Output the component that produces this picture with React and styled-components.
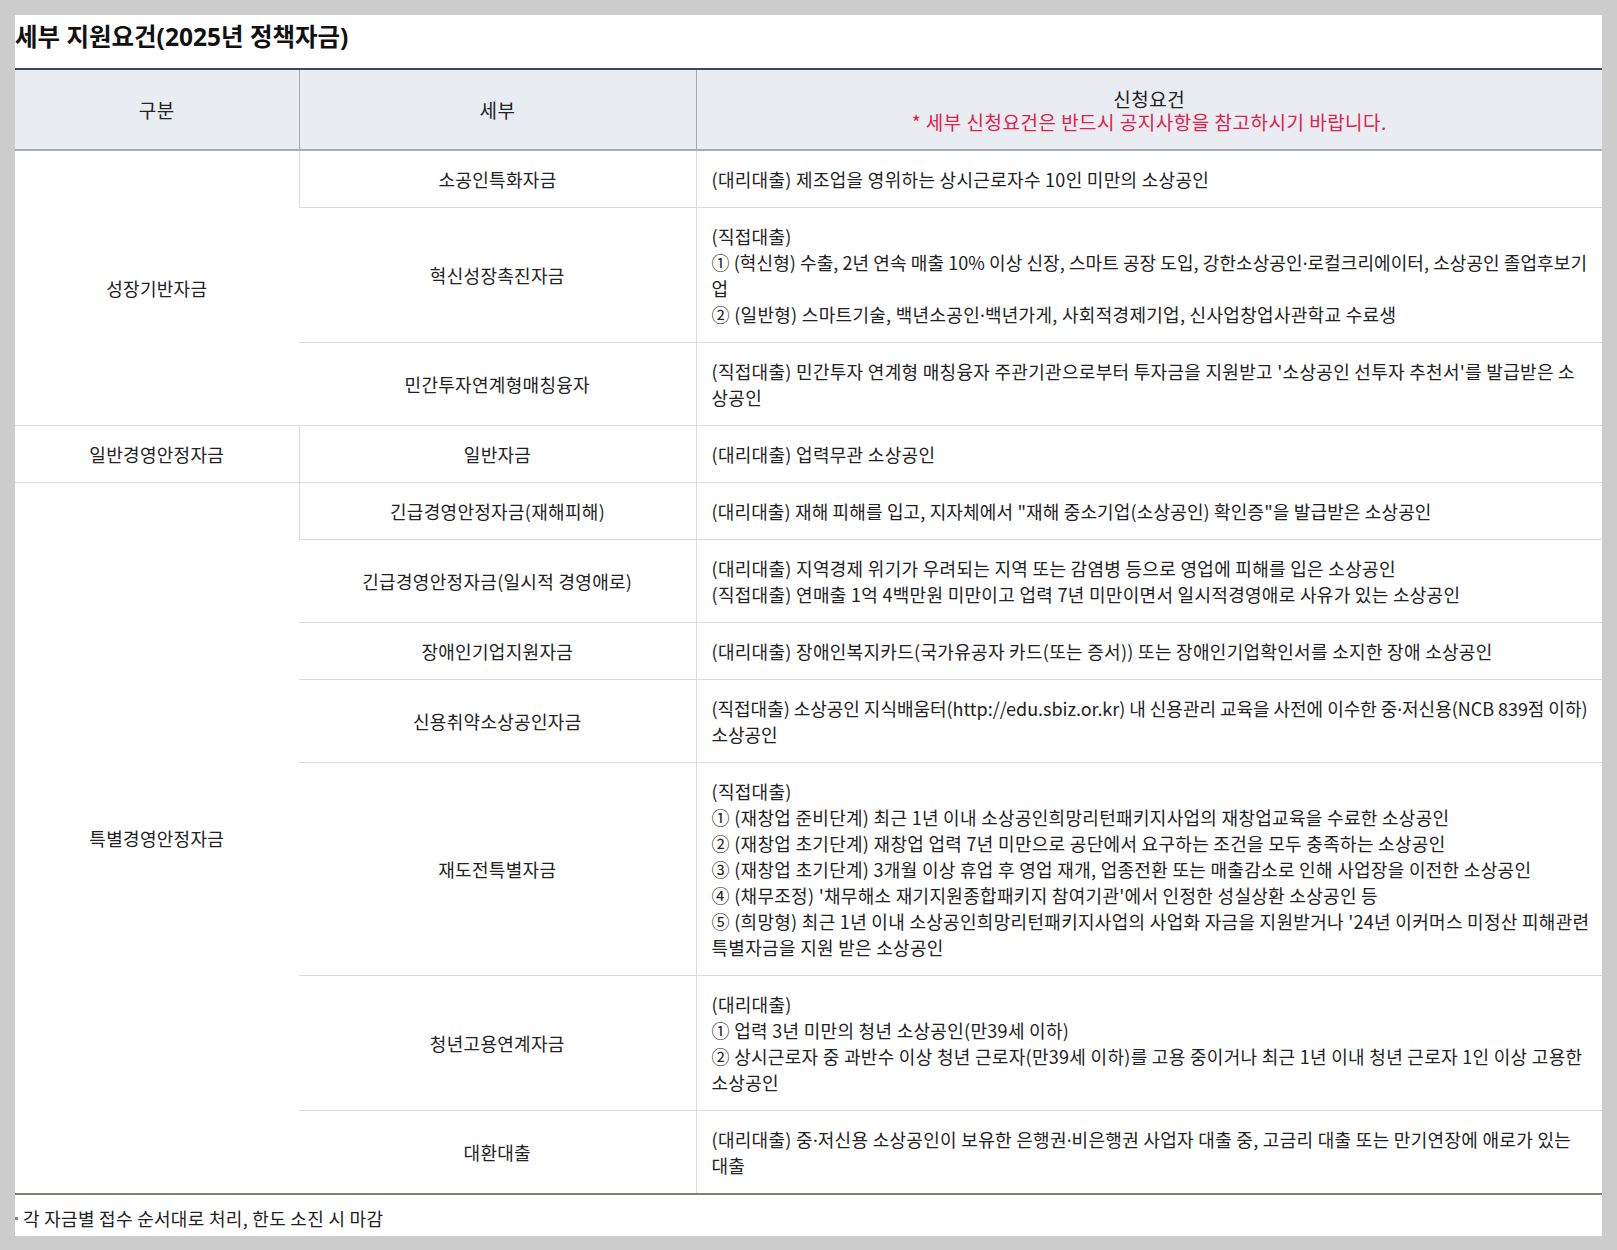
import styled, { createGlobalStyle } from "styled-components";

const GlobalStyle = createGlobalStyle`
  html, body {
    margin: 0;
    padding: 0;
    background: #cccccc;
  }
  body {
    font-family: "Noto Sans CJK KR", "Noto Sans", sans-serif;
    color: #222;
  }
`;

const Panel = styled.div`
  margin: 15px;
  background: #fff;
  padding-bottom: 5px;
`;

const Title = styled.h2`
  margin: 0;
  padding-top: 6px;
  margin-bottom: 15px;
  font-family: "Noto Sans", "Noto Sans CJK KR", sans-serif;
  font-size: 24.5px;
  line-height: 32px;
  font-weight: 700;
  color: #111;
`;

const Table = styled.table`
  width: 100%;
  border-collapse: collapse;
  table-layout: fixed;
  border-top: 2px solid #3d4852;
  border-bottom: 2px solid #808074;
`;

const Th = styled.th`
  height: 79px;
  padding: 0 15px;
  background: #e9ecf1;
  border-left: 1px solid #a9abad;
  border-bottom: 2px solid #a9abad;
  font-size: 19px;
  line-height: 23px;
  letter-spacing: 0.5px;
  font-weight: 400;
  color: #222;
  text-align: center;
  vertical-align: middle;

  &:first-child {
    border-left: none;
  }
`;

const Note = styled.span`
  display: block;
  color: #e0204f;
`;

const Td = styled.td`
  padding: 15px;
  border-left: 1px solid #dcdcdc;
  border-top: 1px solid #dcdcdc;
  font-size: 18px;
  line-height: 26px;
  letter-spacing: 0.3px;
  color: #222;
  vertical-align: middle;
  text-align: ${(p) => (p.$left ? "left" : "center")};

  &:first-child {
    border-left: none;
  }
`;

const Dot = styled.span`
  font-family: "Noto Sans", sans-serif;
  line-height: 1;
  letter-spacing: 0;
`;

const Line = styled.div`
  white-space: pre;
  letter-spacing: ${(p) => (p.$ls != null ? `${p.$ls}px` : "inherit")};
`;

const Footnote = styled.p`
  position: relative;
  margin: 10px 0 0;
  padding-left: 8px;
  font-size: 18px;
  line-height: 26px;
  letter-spacing: 0.3px;
  color: #222;

  &::before {
    content: "";
    position: absolute;
    left: 0;
    top: 12px;
    width: 3px;
    height: 3px;
    background: #8a8a8a;
  }
`;

// narrow middle dot, the CJK one is full width
function withDots(text) {
  const parts = text.split("·");
  return parts.flatMap((p, i) => (i === 0 ? [p] : [<Dot key={i}>·</Dot>, p]));
}

const groups = [
  {
    name: "성장기반자금",
    rows: [
      {
        title: "소공인특화자금",
        lines: ["(대리대출) 제조업을 영위하는 상시근로자수 10인 미만의 소상공인"],
      },
      {
        title: "혁신성장촉진자금",
        lines: [
          "(직접대출)",
          {
            text: "① (혁신형) 수출, 2년 연속 매출 10% 이상 신장, 스마트 공장 도입, 강한소상공인·로컬크리에이터, 소상공인 졸업후보기\n업",
            ls: 0.08,
          },
          "② (일반형) 스마트기술, 백년소공인·백년가게, 사회적경제기업, 신사업창업사관학교 수료생",
        ],
      },
      {
        title: "민간투자연계형매칭융자",
        lines: [
          "(직접대출) 민간투자 연계형 매칭융자 주관기관으로부터 투자금을 지원받고 '소상공인 선투자 추천서'를 발급받은 소\n상공인",
        ],
      },
    ],
  },
  {
    name: "일반경영안정자금",
    rows: [{ title: "일반자금", lines: ["(대리대출) 업력무관 소상공인"] }],
  },
  {
    name: "특별경영안정자금",
    rows: [
      {
        title: "긴급경영안정자금(재해피해)",
        lines: [
          {
            text: '(대리대출) 재해 피해를 입고, 지자체에서 "재해 중소기업(소상공인) 확인증"을 발급받은 소상공인',
            ls: 0.15,
          },
        ],
      },
      {
        title: "긴급경영안정자금(일시적 경영애로)",
        lines: [
          "(대리대출) 지역경제 위기가 우려되는 지역 또는 감염병 등으로 영업에 피해를 입은 소상공인",
          "(직접대출) 연매출 1억 4백만원 미만이고 업력 7년 미만이면서 일시적경영애로 사유가 있는 소상공인",
        ],
      },
      {
        title: "장애인기업지원자금",
        lines: [
          "(대리대출) 장애인복지카드(국가유공자 카드(또는 증서)) 또는 장애인기업확인서를 소지한 장애 소상공인",
        ],
      },
      {
        title: "신용취약소상공인자금",
        lines: [
          {
            text: "(직접대출) 소상공인 지식배움터(http://edu.sbiz.or.kr) 내 신용관리 교육을 사전에 이수한 중·저신용(NCB 839점 이하)\n소상공인",
            ls: -0.03,
          },
        ],
      },
      {
        title: "재도전특별자금",
        lines: [
          "(직접대출)",
          "① (재창업 준비단계) 최근 1년 이내 소상공인희망리턴패키지사업의 재창업교육을 수료한 소상공인",
          "② (재창업 초기단계) 재창업 업력 7년 미만으로 공단에서 요구하는 조건을 모두 충족하는 소상공인",
          "③ (재창업 초기단계) 3개월 이상 휴업 후 영업 재개, 업종전환 또는 매출감소로 인해 사업장을 이전한 소상공인",
          "④ (채무조정) '채무해소 재기지원종합패키지 참여기관'에서 인정한 성실상환 소상공인 등",
          "⑤ (희망형) 최근 1년 이내 소상공인희망리턴패키지사업의 사업화 자금을 지원받거나 '24년 이커머스 미정산 피해관련\n특별자금을 지원 받은 소상공인",
        ],
      },
      {
        title: "청년고용연계자금",
        lines: [
          "(대리대출)",
          "① 업력 3년 미만의 청년 소상공인(만39세 이하)",
          "② 상시근로자 중 과반수 이상 청년 근로자(만39세 이하)를 고용 중이거나 최근 1년 이내 청년 근로자 1인 이상 고용한\n소상공인",
        ],
      },
      {
        title: "대환대출",
        lines: [
          "(대리대출) 중·저신용 소상공인이 보유한 은행권·비은행권 사업자 대출 중, 고금리 대출 또는 만기연장에 애로가 있는\n대출",
        ],
      },
    ],
  },
];

// each "\n" marks where the original wraps; one Line per visual line
function visualLines(lines) {
  return lines.flatMap((l) => {
    const line = typeof l === "string" ? { text: l } : l;
    return line.text.split("\n").map((t) => ({ text: t, ls: line.ls }));
  });
}

export default function App() {
  return (
    <>
      <GlobalStyle />
      <Panel>
        <Title>세부 지원요건(2025년 정책자금)</Title>
        <Table>
          <colgroup>
            <col style={{ width: 284 }} />
            <col style={{ width: 397 }} />
            <col />
          </colgroup>
          <thead>
            <tr>
              <Th>구분</Th>
              <Th>세부</Th>
              <Th>
                신청요건
                <Note>* 세부 신청요건은 반드시 공지사항을 참고하시기 바랍니다.</Note>
              </Th>
            </tr>
          </thead>
          <tbody>
            {groups.map((g) =>
              g.rows.map((r, i) => (
                <tr key={r.title}>
                  {i === 0 && <Td rowSpan={g.rows.length}>{g.name}</Td>}
                  <Td>{r.title}</Td>
                  <Td $left>
                    {visualLines(r.lines).map((line, k) => (
                      <Line key={k} $ls={line.ls}>
                        {withDots(line.text)}
                      </Line>
                    ))}
                  </Td>
                </tr>
              ))
            )}
          </tbody>
        </Table>
        <Footnote>각 자금별 접수 순서대로 처리, 한도 소진 시 마감</Footnote>
      </Panel>
    </>
  );
}
